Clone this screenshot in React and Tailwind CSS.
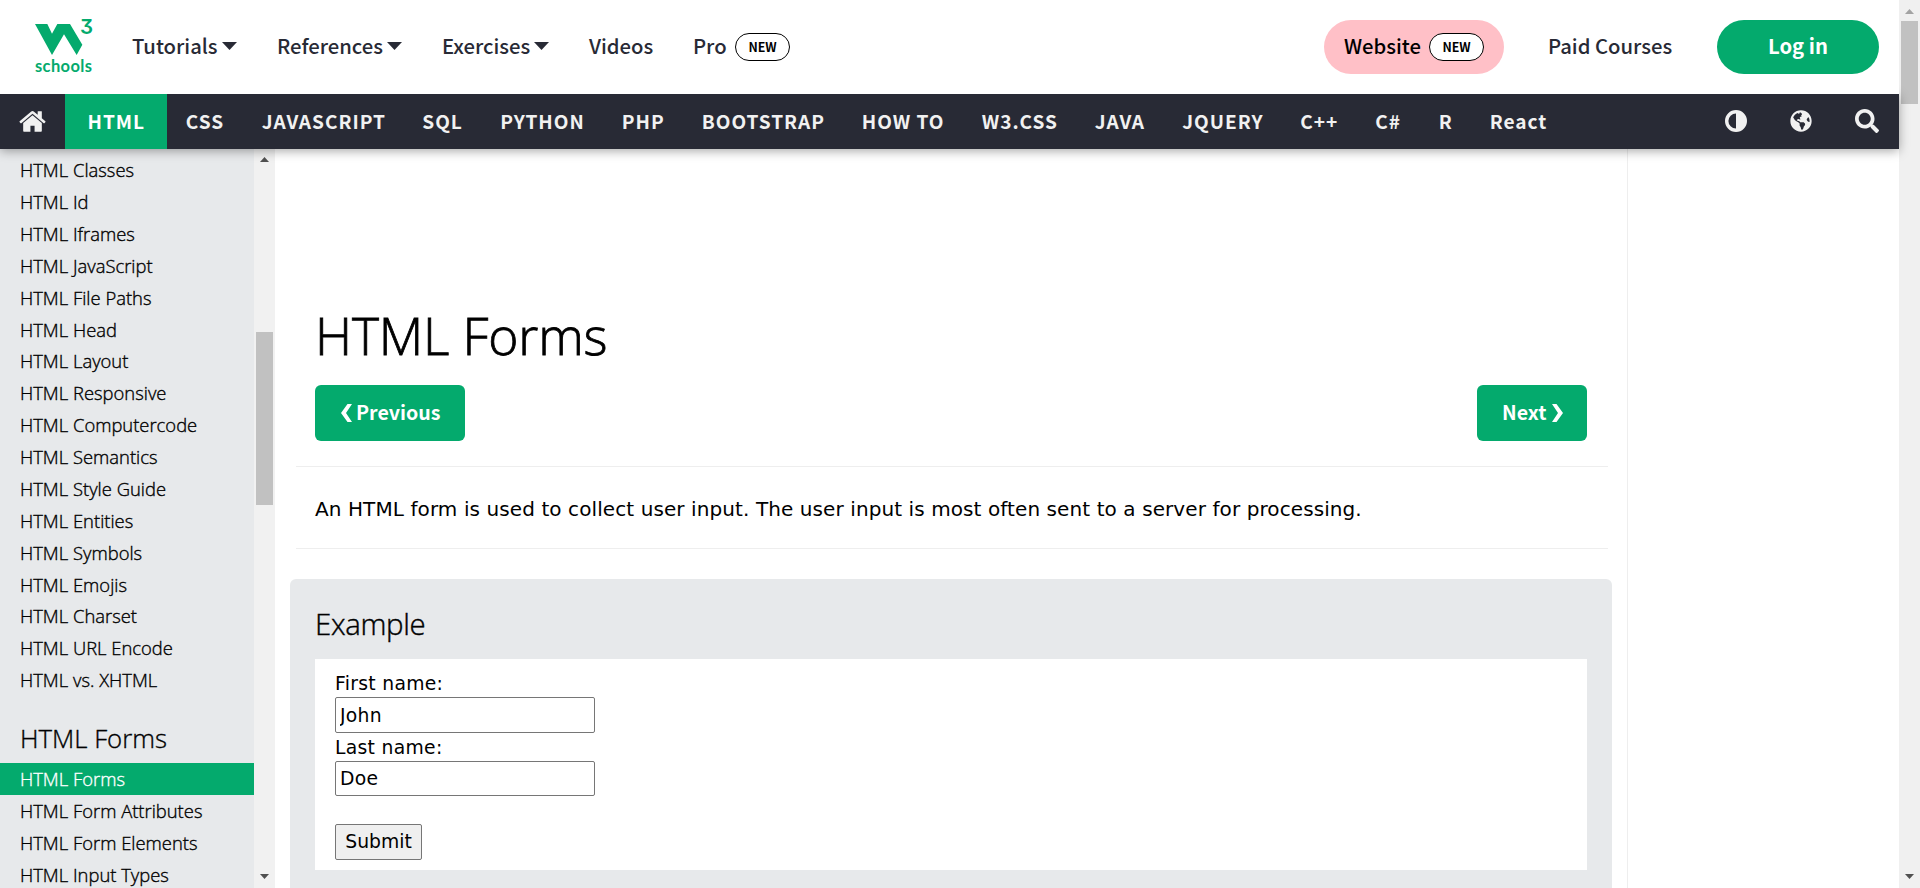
import React from 'react';
import { FaGlobeAmericas, FaSearch } from 'react-icons/fa';

const subnav = [
  ['CSS', 'w-[76px]'],
  ['JAVASCRIPT', 'w-[160.5px]'],
  ['SQL', 'w-[78px]'],
  ['PYTHON', 'w-[121.5px]'],
  ['PHP', 'w-[80px]'],
  ['BOOTSTRAP', 'w-[160px]'],
  ['HOW TO', 'w-[120px]'],
  ['W3.CSS', 'w-[113px]'],
  ['JAVA', 'w-[87.5px]'],
  ['JQUERY', 'w-[118px]'],
  ['C++', 'w-[75px]'],
  ['C#', 'w-[63.5px]'],
  ['R', 'w-[51px]'],
  ['React', 'w-[94px]'],
];

const chapters = [
  'Classes', 'Id', 'Iframes', 'JavaScript', 'File Paths', 'Head', 'Layout', 'Responsive',
  'Computercode', 'Semantics', 'Style Guide', 'Entities', 'Symbols', 'Emojis', 'Charset',
  'URL Encode', 'vs. XHTML',
];

function Caret() {
  return (
    <svg className="ml-[4px] h-[8px] w-[15px] fill-[#282a35]" viewBox="0 0 14 8" preserveAspectRatio="none">
      <path d="M0 0h14L7 8z" />
    </svg>
  );
}

function Badge() {
  return (
    <span className="flex h-[28px] w-[55px] items-center justify-center rounded-full border border-black bg-white text-[12.4px] leading-[26px] font-bold text-black">
      NEW
    </span>
  );
}

function Arrow({ up, className }) {
  return (
    <svg className={className} viewBox="0 0 9 5">
      <path d={up ? 'M0 5h9L4.500 0z' : 'M0 0h9L4.500 5z'} />
    </svg>
  );
}

function Home() {
  return (
    <svg className="h-[29px] w-[29px] fill-current" viewBox="0 0 1792 1792">
      <path d="M1472 992v480q0 26-19 45t-45 19h-384v-384h-256v384h-384q-26 0-45-19t-19-45v-480q0-1 .5-3t.5-3l575-474 575 474q1 2 1 6zm223-69l-62 74q-8 9-21 11h-3q-13 0-21-7l-692-577-692 577q-12 8-24 7-13-2-21-11l-62-74q-8-10-7-23.500t11-21.500l719-599q32-26 76-26t76 26l244 204v-195q0-14 9-23t23-9h192q14 0 23 9t9 23v408l219 182q10 8 11 21.500t-7 23.500z" />
    </svg>
  );
}

function Logo() {
  return (
    <div className="relative h-[94px] w-[132px] shrink-0 text-[#04aa6d]">
      <svg className="absolute left-[35px] top-[24px] h-[31px] w-[49px] fill-current" viewBox="107 72 147 93">
        <path d="M107 72h37l14 29 16-29h38l37 62-17 31-38-62-36 62z" />
      </svg>
      <span className="absolute left-[80px] top-[15px] font-['Inter',sans-serif] text-[20.500px] font-semibold leading-[24px] [font-feature-settings:'cv09']">
        3
      </span>
      <span className="absolute left-[35px] top-[55px] font-['Lato',sans-serif] text-[16.500px] font-bold leading-[22px] tracking-[0.350px]">
        schools
      </span>
    </div>
  );
}

function Header() {
  return (
    <header className="relative z-20 flex h-[94px] items-center bg-white text-[20.250px] font-medium text-[#282a35]">
      <Logo />
      <nav className="flex items-center pb-[2px]">
        <span className="flex w-[145px] items-center">Tutorials<Caret /></span>
        <span className="flex w-[165px] items-center">References<Caret /></span>
        <span className="flex w-[147px] items-center">Exercises<Caret /></span>
        <span className="w-[104px]">Videos</span>
        <span className="w-[42px]">Pro</span>
      </nav>
      <Badge />
      <div className="ml-auto mr-[20px] flex items-center">
        <div className="flex h-[54px] w-[180px] items-center justify-between rounded-full bg-[#ffc0c7] pl-[20px] pr-[20px] text-black">
          <span className="pb-[2px]">Website</span>
          <Badge />
        </div>
        <span className="ml-[44px] w-[169px] pb-[2px]">Paid Courses</span>
        <button className="h-[54px] w-[162px] rounded-full bg-[#04aa6d] pb-[2px] font-bold text-white">Log in</button>
      </div>
    </header>
  );
}

function SubNav() {
  return (
    <nav className="relative z-10 flex h-[55px] items-center bg-[#282a35] text-[19.100px] font-bold tracking-[0.970px] text-[#f1f1f1] shadow-[0_2px_10px_rgba(0,0,0,0.35)]">
      <span className="flex w-[64px] shrink-0 justify-center">
        <Home />
      </span>
      <span className="ml-px flex h-full w-[102px] shrink-0 items-center bg-[#04aa6d] pl-[22.500px] text-white">HTML</span>
      {subnav.map(([label, width]) => (
        <span key={label} className={`${width} shrink-0 whitespace-nowrap pl-[18.750px]`}>{label}</span>
      ))}
      <span className="ml-auto mr-[20px] flex items-center gap-[43px] pb-[2px]">
        <svg className="h-[22px] w-[22px]" viewBox="0 0 22 22">
          <circle cx="11" cy="11" r="9.300" fill="none" stroke="currentColor" strokeWidth="3.400" />
          <path d="M11 1a10 10 0 0 1 0 20z" fill="currentColor" />
        </svg>
        <FaGlobeAmericas className="h-[22px] w-[22px]" />
        <FaSearch className="h-[24px] w-[24px]" />
      </span>
    </nav>
  );
}

const rowClass = 'flex h-[31.875px] shrink-0 items-center pl-[20px] whitespace-nowrap';

function Sidebar() {
  return (
    <aside className="flex w-[275px] shrink-0 overflow-hidden font-['Open_Sans',sans-serif] font-light [-webkit-text-stroke:0.35px]">
      <div className="flex w-[254px] flex-col overflow-hidden bg-[#e7e9eb] pt-[5px] text-[18.400px]">
        {chapters.map((c) => <div key={c} className={rowClass}>HTML {c}</div>)}
        <h2 className="flex h-[67.100px] shrink-0 items-end pb-[4.800px] pl-[20px] text-[25.750px] leading-[40px]">HTML Forms</h2>
        <div className={`${rowClass} bg-[#04aa6d] text-white`}>HTML Forms</div>
        <div className={rowClass}>HTML Form Attributes</div>
        <div className={rowClass}>HTML Form Elements</div>
        <div className={rowClass}>HTML Input Types</div>
      </div>
      <div className="flex w-[21px] flex-col items-center bg-[#f1f1f1] pb-[9px] pt-[8px]">
        <Arrow up className="h-[5px] w-[9px] fill-[#505050]" />
        <div className="mt-[170px] h-[173px] w-[17px] bg-[#c1c1c1]" />
        <Arrow className="mt-auto h-[5px] w-[9px] fill-[#505050]" />
      </div>
    </aside>
  );
}

function NavButtons() {
  const button = 'flex h-[56px] items-center rounded-[6px] bg-[#04aa6d] text-[19.600px] font-bold text-white';
  return (
    <div className="mt-[12px] flex justify-between px-[25px] font-['Noto_Sans_CJK_SC',sans-serif]">
      <button className={`${button} w-[150px] pl-[26px]`}>
        <svg className="mr-[4px] h-[18px] w-[11px] fill-current" viewBox="0 0 11 18">
          <path d="M6.500 0H11L5 9l6 9H6.500L0 9z" />
        </svg>
        <span className="pb-[2px]">Previous</span>
      </button>
      <button className={`${button} w-[110px] pl-[25px]`}>
        <span className="w-[50px] pb-[2px] text-left">Next</span>
        <svg className="h-[18px] w-[11px] fill-current" viewBox="0 0 11 18">
          <path d="M4.500 0H0l6 9-6 9h4.500L11 9z" />
        </svg>
      </button>
    </div>
  );
}

function Example() {
  const input = 'w-[260px] rounded-[2px] border border-[#767676] bg-white pl-[4px] tracking-[0.300px]';
  return (
    <section className="mt-[30px] flex-1 rounded-t-[6px] bg-[#e7e9eb] px-[25px]">
      <h3 className="flex h-[80px] items-center pt-[11px] font-['Open_Sans',sans-serif] text-[29.400px] font-light tracking-[-0.350px] [-webkit-text-stroke:0.4px]">Example</h3>
      <form className="flex h-[211px] flex-col items-start bg-white pl-[20px] pt-[10px] text-[18.750px]">
        <label className="flex h-[28px] items-center pt-[2px] tracking-[0.300px]">First name:</label>
        <input className={`${input} h-[36px]`} defaultValue="John" />
        <label className="flex h-[28px] items-center pt-[2px] tracking-[0.300px]">Last name:</label>
        <input className={`${input} h-[35px]`} defaultValue="Doe" />
        <button type="button" className="mt-[28px] h-[36px] w-[87px] rounded-[2px] border border-[#767676] bg-[#efefef] pt-px">Submit</button>
      </form>
    </section>
  );
}

export default function App() {
  return (
    <div className="flex h-[888px] w-[1920px] overflow-hidden bg-white text-black">
      <div className="flex w-[1899px] flex-col font-['Noto_Sans_CJK_SC',sans-serif]">
        <Header />
        <SubNav />
        <div className="flex min-h-0 flex-1">
          <Sidebar />
          <main className="flex w-[1353px] shrink-0 flex-col overflow-hidden border-r border-[#eeeeee] px-[15px] font-['DejaVu_Sans',sans-serif]">
            <h1 className="ml-[25px] mt-[148px] flex h-[76px] shrink-0 items-center pt-[2px] font-['Open_Sans',sans-serif] text-[51.500px] font-light tracking-[-0.150px] [-webkit-text-stroke:0.8px]">HTML Forms</h1>
            <NavButtons />
            <hr className="ml-[6px] mr-[4px] mt-[25px] border-[#eeeeee]" />
            <p className="flex h-[81px] shrink-0 items-center pl-[25px] pt-[3px] text-[20px] tracking-[0.090px]">
              An HTML form is used to collect user input. The user input is most often sent to a server for processing.
            </p>
            <hr className="ml-[6px] mr-[4px] border-[#eeeeee]" />
            <Example />
          </main>
        </div>
      </div>
      <div className="flex w-[21px] flex-col items-center bg-[#f0f0f0] pb-[9px] pt-[9px]">
        <Arrow up className="h-[5px] w-[9px] fill-[#a3a3a3]" />
        <div className="mt-[7px] h-[83px] w-[17px] bg-[#c1c1c1]" />
        <Arrow className="mt-auto h-[5px] w-[9px] fill-[#505050]" />
      </div>
    </div>
  );
}
